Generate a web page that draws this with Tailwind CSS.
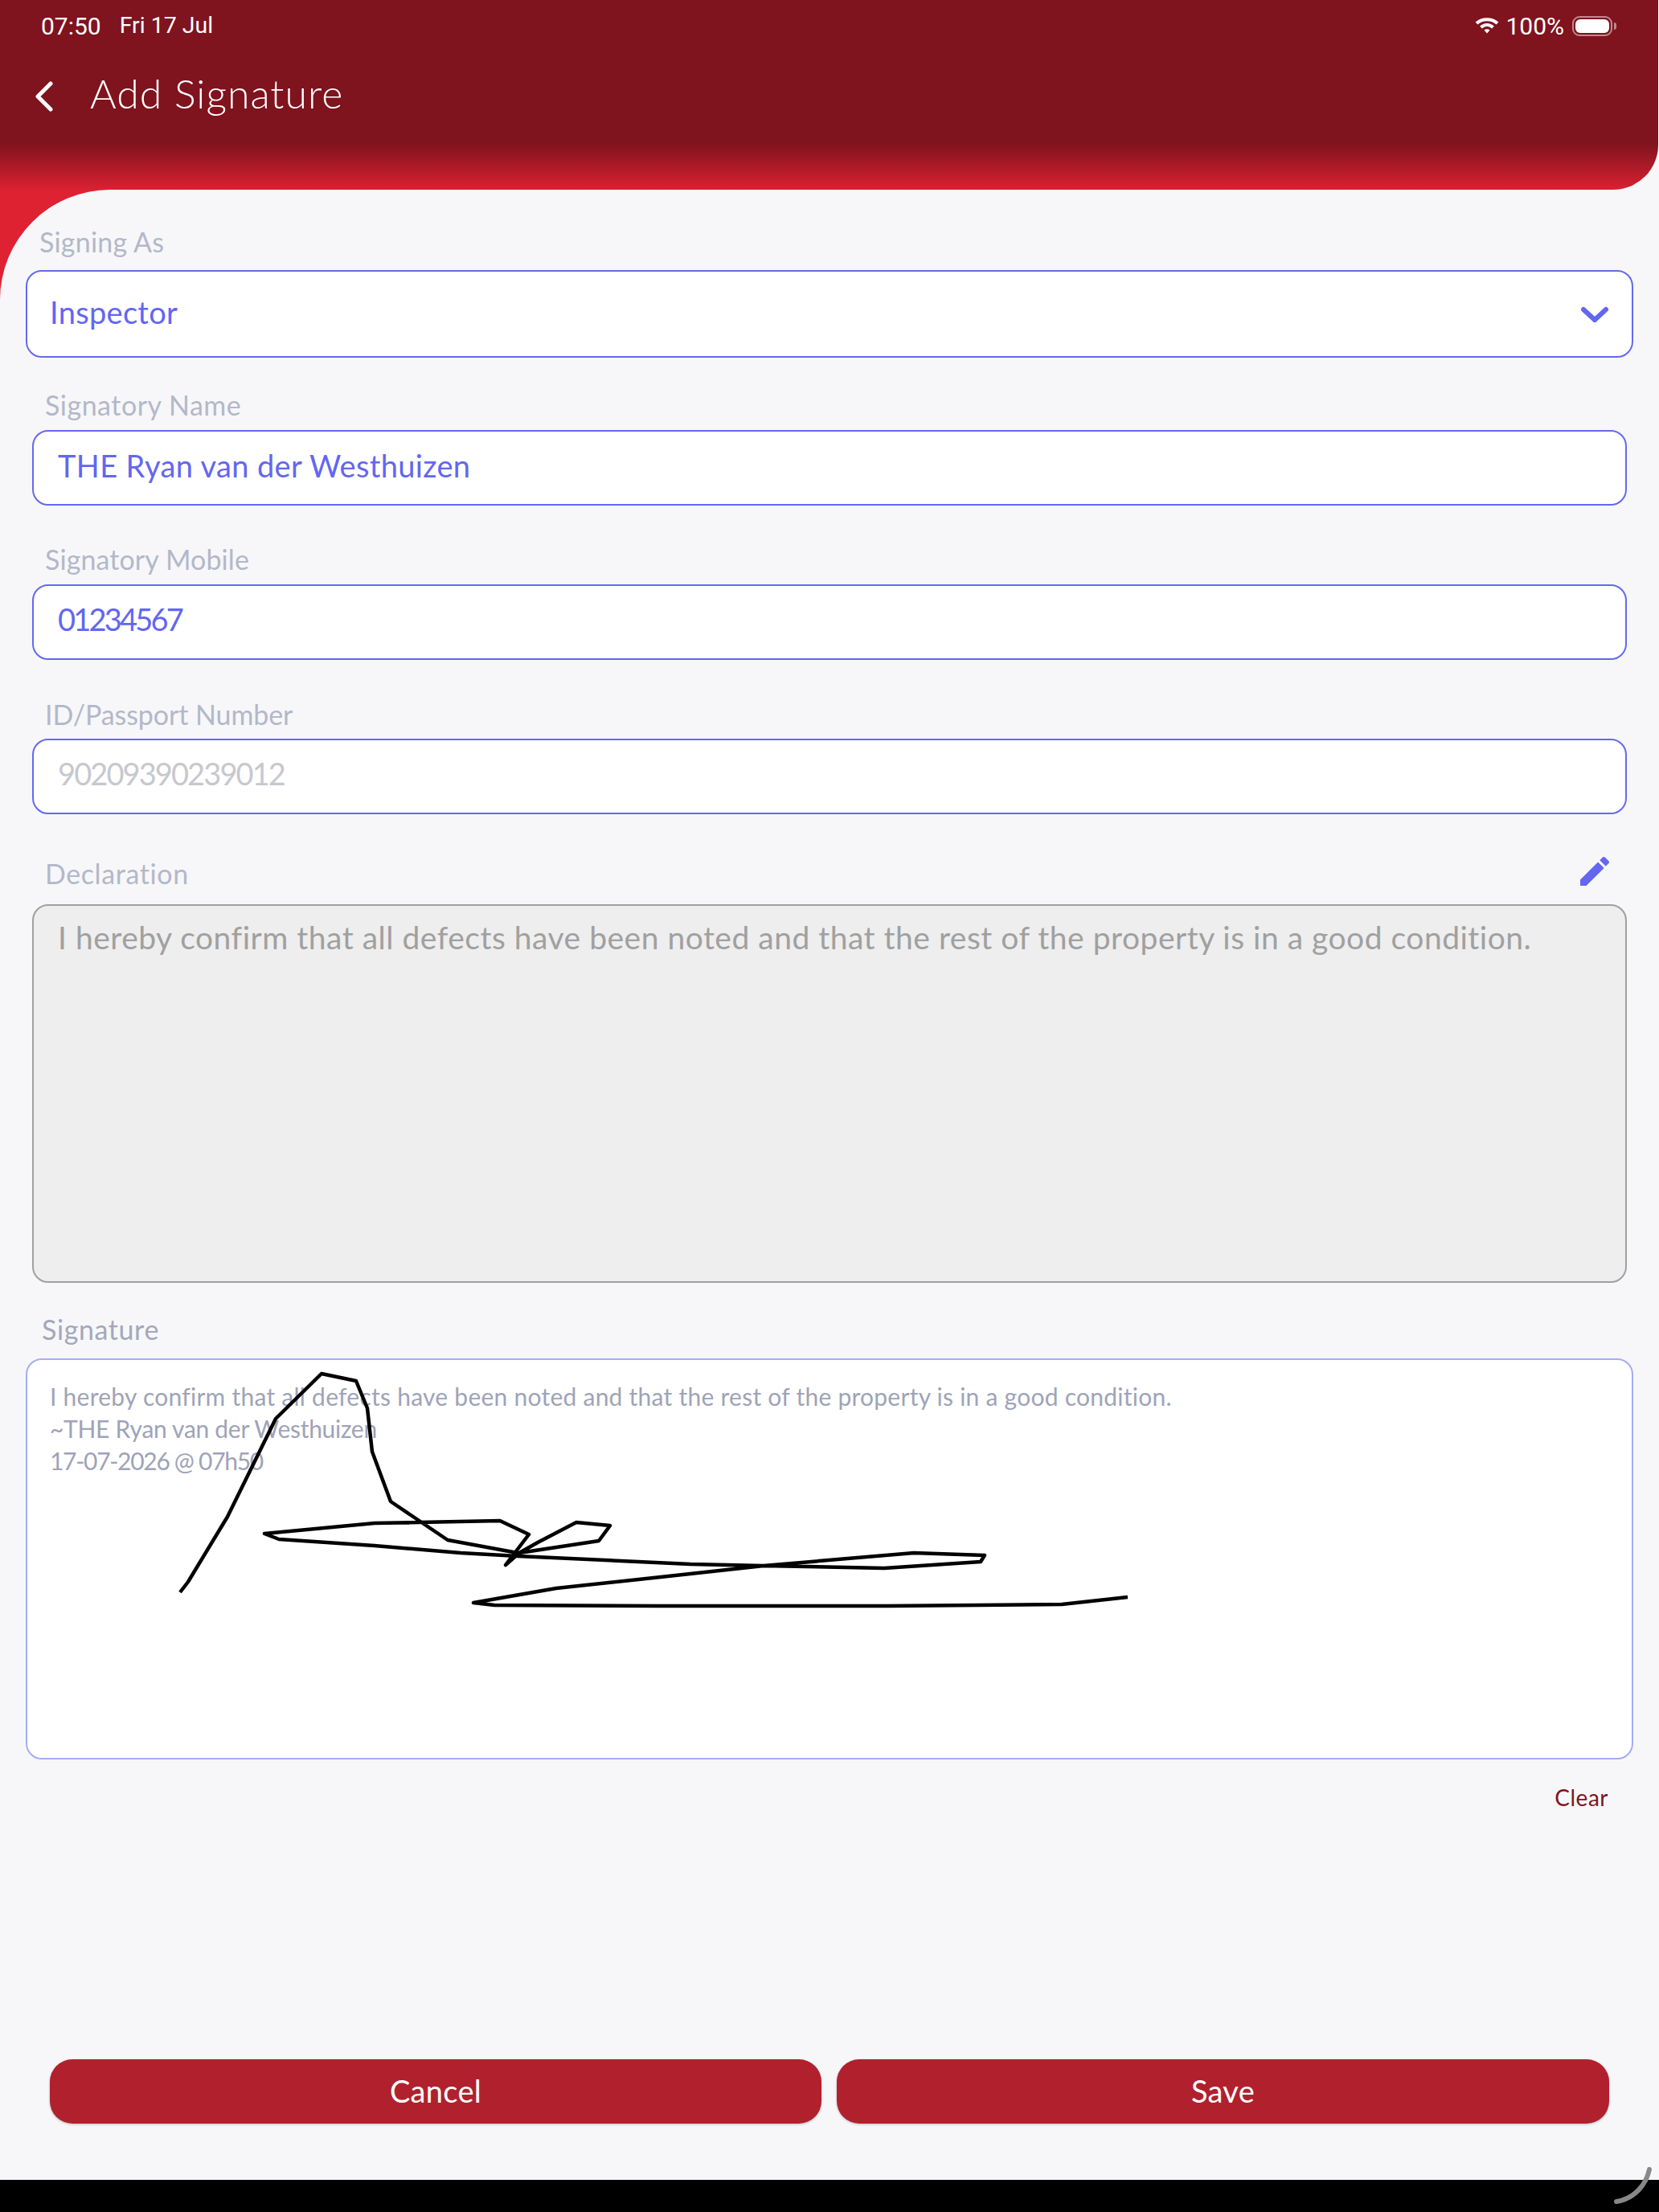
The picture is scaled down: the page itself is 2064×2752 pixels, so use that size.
<!DOCTYPE html>
<html lang="en">
<head>
    <meta charset="UTF-8">
    <title>Add Signature</title>
    <script src="https://cdn.jsdelivr.net/npm/@tailwindcss/browser@4"></script>
</head>
<body class="bg-[#f7f7f9]">
<div class="relative w-[2064px] h-[2752px] overflow-hidden flex flex-col bg-[#f7f7f9] font-['Lato',sans-serif]">

    <!-- header -->
    <header class="w-[2063px] h-[236px] shrink-0 rounded-br-[56px] bg-[linear-gradient(to_bottom,#7f131e_0px,#7f131e_178px,#e02233_240px)] text-white">
        <div class="flex items-center justify-between h-[64px] pl-[51px] pr-[52px] font-['Roboto',sans-serif] text-[30px]">
            <div class="flex items-center gap-[23px]"><span>07:50</span><span class="text-[28.5px]">Fri 17 Jul</span></div>
            <div class="flex items-center">
                <svg class="w-[30px] h-[22px] mr-[8px]" viewBox="0 0 30 22" fill="none" stroke="white" stroke-width="4">
                    <path d="M2 8 C9 1.5 21 1.5 28 8"/>
                    <path d="M7.5 13 C12 9 18 9 22.500 13"/>
                    <path d="M11.5 16.500 L15 20.500 L18.500 16.500 C16.500 14.700 13.500 14.700 11.500 16.500Z" fill="white" stroke="none"/>
                </svg>
                <span>100%</span>
                <div class="ml-[10px] w-[50px] h-[25px] rounded-[9px] border-2 border-white/50 p-[2px]">
                    <div class="w-full h-full rounded-[6px] bg-white"></div>
                </div>
                <div class="w-[3px] h-[9px] ml-[2px] rounded-r-full bg-white/50"></div>
            </div>
        </div>
        <div class="flex items-center h-[64px] mt-[24px] pl-[44px]">
            <svg class="w-[22px] h-[38px]" viewBox="0 0 22 38" fill="none" stroke="white" stroke-width="5" stroke-linecap="round" stroke-linejoin="round">
                <path d="M19 3 L3 19 L19 35"/>
            </svg>
            <h1 class="ml-[46px] mb-[8px] text-[50px] font-light leading-none tracking-[1px]">Add Signature</h1>
        </div>
    </header>

    <!-- red corner behind the rounded content -->
    <div class="absolute top-[236px] left-0 w-[140px] h-[140px] bg-[#de2232]"></div>

    <main class="relative flex-1 flex flex-col rounded-tl-[137px] bg-[#f7f7f9]">
        <div class="mt-[46px] ml-[49px] h-[40px] leading-[38px] text-[34px] tracking-[0.2px] text-[#b3b8c9]">Signing As</div>
        <div class="mt-[14px] ml-[32px] w-[2000px] h-[109px] flex items-center justify-between pb-[4px] pl-[28px] pr-[28px] rounded-[20px] border-2 border-[#6469f0] bg-white text-[38px] tracking-[0.3px] text-[#6366f1]">
            <span>Inspector</span>
            <svg class="w-[38px] h-[22px] mt-[6px]" viewBox="0 0 38 22" fill="none" stroke="#6366f1" stroke-width="6" stroke-linecap="round" stroke-linejoin="round">
                <path d="M6 4 L20 17 L34 4"/>
            </svg>
        </div>

        <div class="mt-[40px] ml-[56px] h-[40px] leading-[38px] text-[34px] tracking-[0.5px] text-[#b3b8c9]">Signatory Name</div>
        <div class="mt-[10px] ml-[40px] w-[1984px] h-[94px] flex items-center pb-[6px] pl-[30px] rounded-[20px] border-2 border-[#6469f0] bg-white text-[38px] tracking-[0.35px] text-[#6366f1]">THE Ryan van der Westhuizen</div>

        <div class="mt-[48px] ml-[56px] h-[40px] leading-[38px] text-[34px] tracking-[0.1px] text-[#b3b8c9]">Signatory Mobile</div>
        <div class="mt-[10px] ml-[40px] w-[1984px] h-[94px] flex items-center pb-[7px] pl-[30px] rounded-[20px] border-2 border-[#6469f0] bg-white text-[38px] tracking-[-2.8px] text-[#6366f1]">01234567</div>

        <div class="mt-[49px] ml-[56px] h-[40px] leading-[38px] text-[34px] tracking-[-0.1px] text-[#b3b8c9]">ID/Passport Number</div>
        <div class="mt-[9px] ml-[40px] w-[1984px] h-[94px] flex items-center pb-[7px] pl-[30px] rounded-[20px] border-2 border-[#6469f0] bg-white text-[38px] tracking-[-1.9px] text-[#c7c8ce]">90209390239012</div>

        <div class="mt-[55px] ml-[56px] mr-[56px] h-[40px] flex items-center justify-between text-[34px] tracking-[0.6px] text-[#b3b8c9]">
            <span class="-mt-[3px]">Declaration</span>
            <svg class="w-[48px] h-[48px] mb-[8px]" viewBox="0 0 24 24" fill="#6366f1">
                <path d="M3 17.25V21h3.75L17.81 9.94l-3.75-3.75L3 17.25zM20.71 7.04c.39-.39.39-1.02 0-1.41l-2.34-2.34c-.39-.39-1.02-.39-1.41 0l-1.83 1.83 3.75 3.75 1.83-1.83z"/>
            </svg>
        </div>
        <div class="mt-[17px] ml-[40px] w-[1984px] h-[471px] pt-[10px] pl-[30px] rounded-[20px] border-2 border-[#a0a0a0] bg-[#eeeeee] text-[39px] tracking-[0.5px] text-[#a0a0a0]">I hereby confirm that all defects have been noted and that the rest of the property is in a good condition.</div>

        <div class="mt-[39px] ml-[52px] h-[40px] leading-[38px] text-[34px] tracking-[0.6px] text-[#a3a8ba]">Signature</div>
        <div class="relative mt-[15px] ml-[32px] w-[2000px] h-[499px] pt-[25px] pl-[28px] rounded-[20px] border-2 border-[#a5acf8] bg-white text-[30px] leading-[40px] text-[#9ea3b8]">
            <div class="tracking-[0.25px]">I hereby confirm that all defects have been noted and that the rest of the property is in a good condition.</div>
            <div class="tracking-[-0.3px]">~THE Ryan van der Westhuizen</div>
            <div class="tracking-[-1.3px]">17-07-2026 @ 07h50</div>
        </div>

        <div class="mt-[27px] mr-[63px] self-end text-[28px] tracking-[0.5px] leading-[40px] text-[#7f131e]">Clear</div>

        <div class="absolute left-[62px] top-[2326px] flex gap-[19px]">
            <button class="w-[960px] h-[80px] pb-[2px] rounded-[28px] bg-[#b0212d] text-[38px] tracking-[0.3px] text-white shadow-[0_1px_3px_rgba(0,0,0,0.25)]">Cancel</button>
            <button class="w-[961px] h-[80px] pb-[2px] rounded-[28px] bg-[#b0212d] text-[38px] tracking-[0.3px] text-white shadow-[0_1px_3px_rgba(0,0,0,0.25)]">Save</button>
        </div>
    </main>

    <!-- signature ink -->
    <svg class="absolute left-0 top-0 w-[2064px] h-[2752px] pointer-events-none" viewBox="0 0 2064 2752" fill="none" stroke="black" stroke-width="4.5" stroke-linejoin="round">
        <path d="M224 1981 L234 1968 L283 1887 L343 1765 L400 1709 L443 1718 L457 1752 L463 1806 L486 1868 L557 1916 L644 1932 L646 1932 L745 1917 L759 1898 L717 1894 L669 1919 L646 1932 L629 1947 L658 1909 L622 1892 L466 1895 L329 1908 L347 1915 L466 1923 L573 1932 L644 1936 L859 1946 L950 1948 L1100 1951 L1220 1943 L1225 1935 L1137 1932 L950 1948 L813 1963 L692 1976 L589 1994 L615 1997 L818 1998 L1105 1998 L1321 1996 L1403 1987"/>
    </svg>

    <!-- bottom bar -->
    <div class="absolute left-0 bottom-0 w-full h-[40px] bg-black"></div>
    <svg class="absolute left-[2000px] top-[2690px] w-[64px] h-[60px]" viewBox="0 0 64 60" fill="none" stroke="#888888" stroke-width="6" stroke-linecap="round">
        <path d="M52 9 C48 28 34 45 11 49"/>
    </svg>
</div>
</body>
</html>
